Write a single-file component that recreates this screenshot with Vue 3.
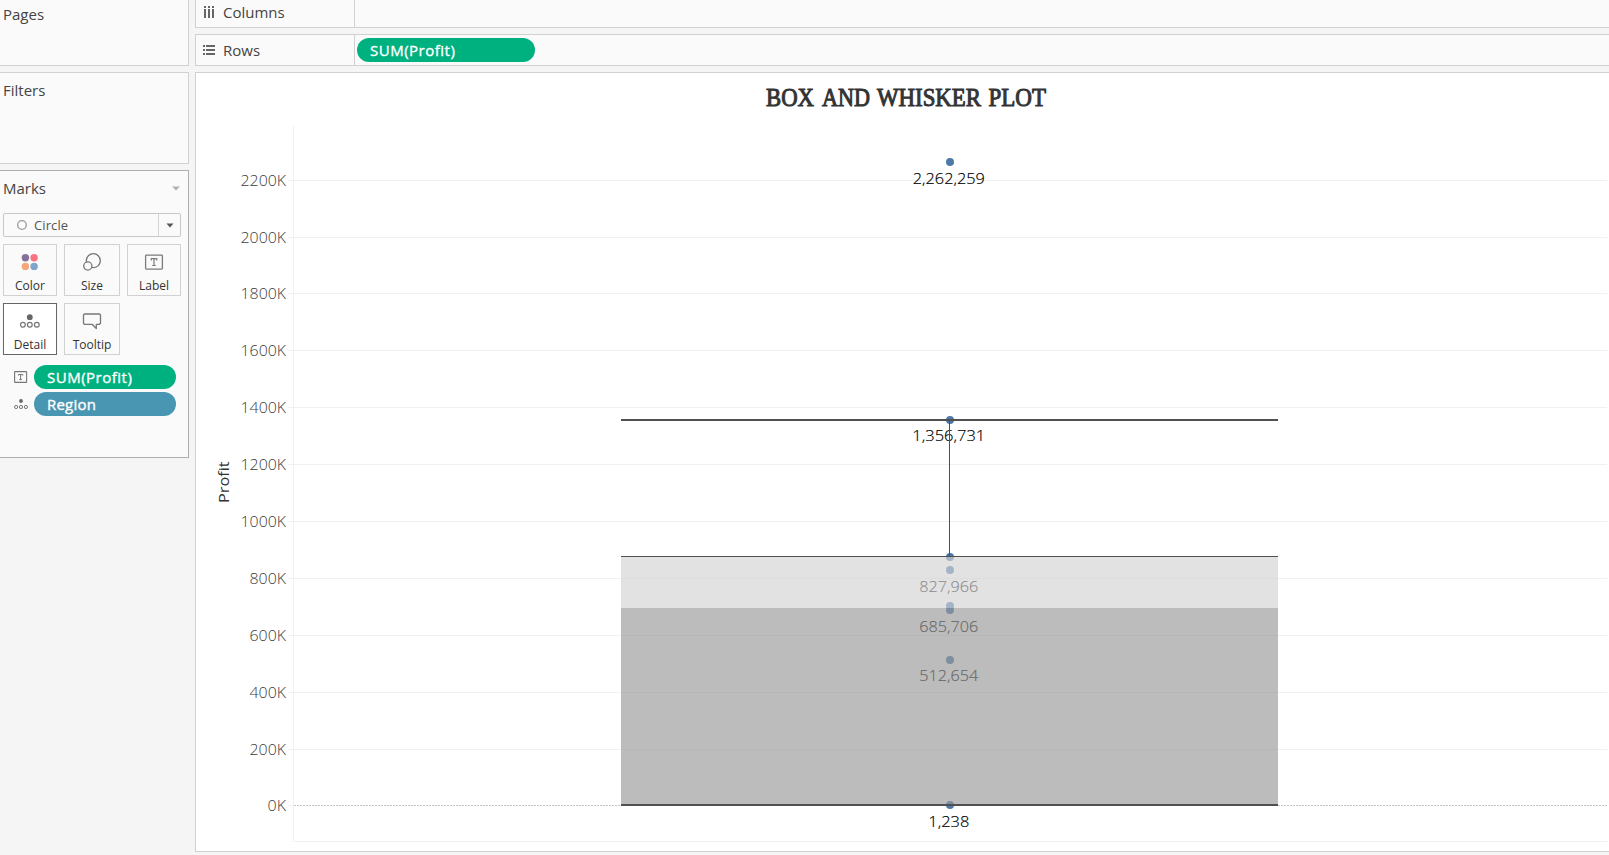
<script setup>
const cards = [
  { name: 'Color' },
  { name: 'Size' },
  { name: 'Label' },
  { name: 'Detail', active: true },
  { name: 'Tooltip' },
]

const titleWords = [
  { text: 'BOX', x: 766, w: 48 },
  { text: 'AND', x: 822, w: 48 },
  { text: 'WHISKER', x: 877, w: 104 },
  { text: 'PLOT', x: 988.5, w: 57.5 },
]

const ticks = [
  { label: '2200K', y: 180 },
  { label: '2000K', y: 237 },
  { label: '1800K', y: 293 },
  { label: '1600K', y: 350 },
  { label: '1400K', y: 407 },
  { label: '1200K', y: 464 },
  { label: '1000K', y: 521 },
  { label: '800K', y: 578 },
  { label: '600K', y: 635 },
  { label: '400K', y: 692 },
  { label: '200K', y: 749 },
  { label: '0K', y: 805 },
]
const tickWidth = (label) => ({ 5: 45.5, 4: 36.5, 2: 18.5 })[label.length]

const dots = [162, 420, 557, 570, 606, 610, 660, 805]

const marks = [
  { label: '2,262,259', y: 184, w: 72 },
  { label: '1,356,731', y: 441, w: 73 },
  { label: '827,966', y: 592, w: 59 },
  { label: '685,706', y: 632, w: 59 },
  { label: '512,654', y: 681, w: 59 },
  { label: '1,238', y: 827, w: 41 },
]
</script>

<template>
  <div class="app">
    <aside class="side">
      <section class="card pages"><h2>Pages</h2></section>
      <section class="card filters"><h2>Filters</h2></section>
      <section class="card marks">
        <div class="marks-head">
          <h2>Marks</h2>
          <svg width="8" height="5" viewBox="0 0 8 5"><path d="M0 .5h8L4 4.5z" fill="#b0b0b0" /></svg>
        </div>
        <div class="select">
          <svg class="ring" width="12" height="12" viewBox="0 0 12 12"><circle cx="6" cy="6" r="4.3" fill="none" stroke="#999" stroke-width="1.3" /></svg>
          <span class="select-text">Circle</span>
          <span class="select-arrow">
            <svg width="8" height="5" viewBox="0 0 8 5"><path d="M.5 .5h7L4 4.5z" fill="#555" /></svg>
          </span>
        </div>
        <div class="grid">
          <div v-for="c in cards" :key="c.name" class="btn" :class="{ active: c.active }">
            <svg v-if="c.name === 'Color'" width="20" height="20" viewBox="0 0 20 20">
              <circle cx="5.4" cy="5.7" r="3.7" fill="#86719a" />
              <circle cx="14.1" cy="5.7" r="3.7" fill="#f8727f" />
              <circle cx="5.4" cy="14.4" r="3.7" fill="#f4a77c" />
              <circle cx="14.1" cy="14.4" r="3.7" fill="#7fa5cb" />
            </svg>
            <svg v-else-if="c.name === 'Size'" width="20" height="20" viewBox="0 0 20 20" fill="none" stroke="#777" stroke-width="1.3">
              <circle cx="11.3" cy="8.7" r="7" />
              <circle cx="5.8" cy="14" r="4.1" fill="#fafafa" />
            </svg>
            <svg v-else-if="c.name === 'Label'" width="20" height="20" viewBox="0 0 20 20" fill="none" stroke="#7b7b7b">
              <rect x="1.6" y="3.1" width="16.8" height="14" rx=".8" stroke-width="1.3" />
              <path d="M7.3 8.5V6.6h5.4v1.9M10 6.6v7M8.2 13.5h3.6" stroke-width="1.2" />
            </svg>
            <svg v-else-if="c.name === 'Detail'" width="20" height="20" viewBox="0 0 20 20" fill="none" stroke="#777" stroke-width="1.2">
              <circle cx="9.8" cy="6.2" r="2.9" fill="#666" stroke="none" />
              <circle cx="2.9" cy="13.8" r="2.4" />
              <circle cx="9.8" cy="13.8" r="2.4" />
              <circle cx="16.8" cy="13.8" r="2.4" />
            </svg>
            <svg v-else width="20" height="20" viewBox="0 0 20 20">
              <path d="M2.5 3h15l1 1v8.3l-1 1h-3.2v4.2l-4.2-4.2H2.5l-1-1V4z" fill="none" stroke="#777" stroke-width="1.3" stroke-linejoin="round" />
            </svg>
            <span>{{ c.name }}</span>
          </div>
        </div>
        <div class="pills">
          <div class="pill-row">
            <svg width="14" height="14" viewBox="0 0 14 14" fill="none" stroke="#777">
              <rect x=".6" y="1.6" width="12" height="10.8" rx=".5" stroke-width="1.1" />
              <path d="M4.4 5.6V4.5h4.4v1.1M6.6 4.5v5.2M5.2 9.6H8" />
            </svg>
            <div class="pill green">SUM(Profit)</div>
          </div>
          <div class="pill-row">
            <svg width="14" height="14" viewBox="0 0 14 14" fill="none" stroke="#777">
              <circle cx="7" cy="4" r="1.9" fill="#666" stroke="none" />
              <circle cx="2.1" cy="10" r="1.6" />
              <circle cx="7" cy="10" r="1.6" />
              <circle cx="11.9" cy="10" r="1.6" />
            </svg>
            <div class="pill blue">Region</div>
          </div>
        </div>
      </section>
    </aside>

    <main class="main">
      <div class="shelf columns">
        <div class="shelf-name">
          <svg width="12" height="12" viewBox="0 0 12 12" fill="#666" shape-rendering="crispEdges">
            <path d="M1 0h2v2H1zM5 0h2v2H5zM9 0h2v2H9zM1 3h2v9H1zM5 3h2v9H5zM9 3h2v9H9z" />
          </svg>
          <span>Columns</span>
        </div>
      </div>
      <div class="shelf rows">
        <div class="shelf-name">
          <svg width="12" height="12" viewBox="0 0 12 12" fill="#666" shape-rendering="crispEdges">
            <path d="M0 1h2v2H0zM0 5h2v2H0zM0 9h2v2H0zM3 1h9v2H3zM3 5h9v2H3zM3 9h9v2H3z" />
          </svg>
          <span>Rows</span>
        </div>
        <div class="pill green wide">SUM(Profit)</div>
      </div>
      <div class="view">
        <svg class="chart" width="1413" height="778" viewBox="196 73 1413 778">
          <text
            v-for="w in titleWords" :key="w.text" class="title"
            :x="w.x" y="106" :textLength="w.w" lengthAdjust="spacingAndGlyphs"
          >{{ w.text }}</text>

          <g shape-rendering="crispEdges">
            <rect x="293" y="126" width="1" height="716" fill="#f1f1f1" />
            <rect x="293" y="841" width="1314" height="1" fill="#f1f1f1" />
            <rect v-for="t in ticks" :key="t.label" x="288" :y="t.y" :width="t.label === '0K' ? 5 : 1319" height="1" fill="#f1f1f1" />
            <path d="M294 805.5H1607" stroke="#c4c4c4" stroke-dasharray="2 1" />
          </g>

          <text
            v-for="t in ticks" :key="t.label" class="tick"
            :x="286 - tickWidth(t.label)" :y="t.y + 6"
            :textLength="tickWidth(t.label)" lengthAdjust="spacingAndGlyphs"
          >{{ t.label }}</text>
          <text class="axis" transform="translate(229 503) rotate(-90)" textLength="41.5" lengthAdjust="spacingAndGlyphs">Profit</text>

          <circle v-for="y in dots" :key="y" cx="950" :cy="y" r="4" fill="#4e79a7" />
          <text
            v-for="m in marks" :key="m.label" class="value"
            :x="948.8 - m.w / 2" :y="m.y" :textLength="m.w" lengthAdjust="spacingAndGlyphs"
          >{{ m.label }}</text>

          <g shape-rendering="crispEdges">
            <rect x="621" y="557" width="657" height="51" fill="#d2d2d2" fill-opacity=".655" />
            <rect x="621" y="608" width="657" height="196" fill="#989898" fill-opacity=".655" />
            <g fill="#505050">
              <rect x="621" y="419" width="657" height="2" />
              <rect x="949" y="420" width="1" height="136" />
              <rect x="621" y="556" width="657" height="1" />
              <rect x="621" y="804" width="657" height="2" />
            </g>
          </g>
        </svg>
      </div>
    </main>
  </div>
</template>

<style>
html,
body {
  margin: 0;
  overflow: hidden;
}
</style>

<style scoped>
.app {
  display: flex;
  gap: 6px;
  width: 1609px;
  height: 855px;
  overflow: hidden;
  background: #f5f5f5;
  color: #333;
  font-family: "Open Sans", "Noto Sans", sans-serif;
  font-weight: 300;
}
.app * {
  box-sizing: border-box;
}
svg {
  display: block;
  flex: none;
}
.side {
  width: 189px;
  flex: none;
  display: flex;
  flex-direction: column;
  gap: 6px;
}
.card {
  background: #fafafa;
  border: 1px solid #d1d1d1;
  border-left: 0;
}
.pages {
  height: 66px;
  border-top: 0;
  padding: 4px 0 0 3px;
}
.filters {
  height: 92px;
  padding: 7px 0 0 3px;
}
.marks {
  height: 288px;
  border-color: #aeaeae;
  padding: 7px 0 0 3px;
}
h2 {
  margin: 0;
  font-size: 15px;
  line-height: 20px;
  font-weight: 400;
  color: #444;
}
.marks-head {
  display: flex;
  justify-content: space-between;
  align-items: center;
  width: 177px;
}
.select {
  display: flex;
  align-items: center;
  width: 178px;
  height: 24px;
  margin-top: 15px;
  padding-left: 12px;
  border: 1px solid #c8c8c8;
  border-radius: 2px;
  font-size: 13px;
  font-weight: 400;
  color: #555;
}
.select-text {
  flex: 1;
  padding-left: 6px;
  letter-spacing: 0.1px;
}
.select-arrow {
  width: 22px;
  height: 22px;
  display: flex;
  align-items: center;
  justify-content: center;
  border-left: 1px solid #d4d4d4;
}
.grid {
  display: grid;
  grid-template-columns: 54px 56px 54px;
  grid-auto-rows: 52px;
  gap: 7px;
  margin-top: 7px;
}
.btn {
  display: flex;
  flex-direction: column;
  align-items: center;
  border: 1px solid #d1d1d1;
  padding-top: 7px;
  font-size: 12px;
  line-height: 16px;
  font-weight: 400;
  color: #333;
}
.btn span {
  margin-top: 6px;
}
.btn.active {
  background: #fff;
  border-color: #666;
}
.pills {
  display: flex;
  flex-direction: column;
  gap: 3px;
  margin: 10px 0 0 11px;
}
.pill-row {
  display: flex;
  align-items: center;
  gap: 6px;
}
.pill {
  width: 142px;
  height: 24px;
  border-radius: 12px;
  padding-left: 13px;
  color: #fff;
  font-size: 15px;
  line-height: 25px;
  font-weight: 400;
  letter-spacing: 0.5px;
  -webkit-text-stroke: 0.35px #fff;
}
.green {
  background: #00b180;
}
.blue {
  background: #4996b2;
  letter-spacing: 0.2px;
}
.wide {
  width: 178px;
  margin-left: 2px;
}
.main {
  flex: 1;
  min-width: 0;
  display: flex;
  flex-direction: column;
  gap: 6px;
}
.shelf {
  display: flex;
  align-items: center;
  background: #fafafa;
  border: 1px solid #d1d1d1;
  border-right: 0;
}
.columns {
  height: 28px;
  border-top: 0;
}
.rows {
  height: 32px;
}
.shelf-name {
  align-self: stretch;
  display: flex;
  align-items: center;
  width: 159px;
  border-right: 1px solid #d1d1d1;
  padding-left: 7px;
  gap: 8px;
  font-size: 15px;
  line-height: 20px;
  font-weight: 400;
  color: #444;
}
.columns .shelf-name {
  padding-bottom: 4px;
}
.view {
  height: 780px;
  background: #fff;
  border: 1px solid #d1d1d1;
  border-right: 0;
}
.title {
  font: 400 25px "Liberation Serif", serif;
  fill: #333;
  stroke: #333;
  stroke-width: 1px;
}
.tick {
  font-size: 15px;
  fill: #3c3c3c;
}
.axis {
  font-size: 15px;
  font-weight: 400;
  fill: #333;
}
.value {
  font-size: 15px;
  fill: #000;
  stroke: #000;
  stroke-width: 0.15px;
}
</style>
